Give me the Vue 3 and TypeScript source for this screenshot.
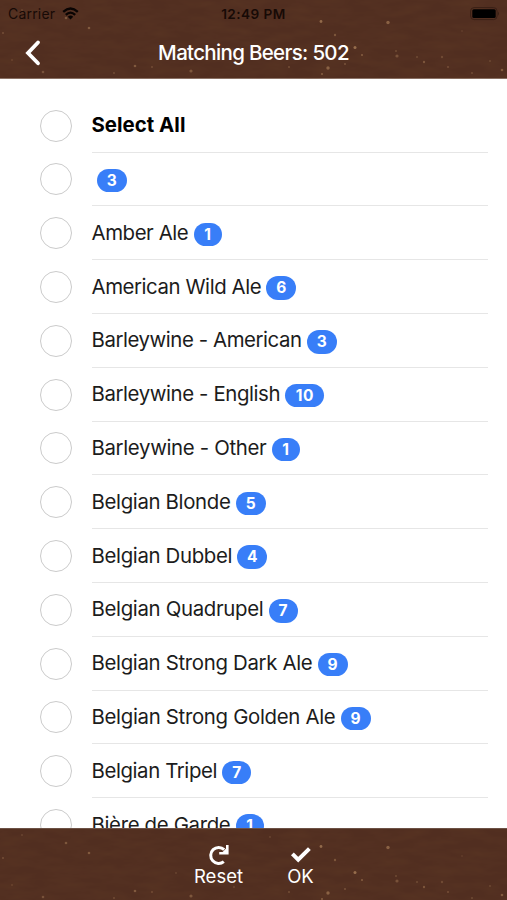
<script setup lang="ts">
interface Style {
  name: string
  count: number | null
  tracking: number
}

const styles: Style[] = [
  { name: 'Select All', count: null, tracking: 0.02 },
  { name: '', count: 3, tracking: 0 },
  { name: 'Amber Ale', count: 1, tracking: -0.42 },
  { name: 'American Wild Ale', count: 6, tracking: -0.43 },
  { name: 'Barleywine - American', count: 3, tracking: -0.43 },
  { name: 'Barleywine - English', count: 10, tracking: -0.4 },
  { name: 'Barleywine - Other', count: 1, tracking: -0.34 },
  { name: 'Belgian Blonde', count: 5, tracking: -0.34 },
  { name: 'Belgian Dubbel', count: 4, tracking: -0.34 },
  { name: 'Belgian Quadrupel', count: 7, tracking: -0.33 },
  { name: 'Belgian Strong Dark Ale', count: 9, tracking: -0.33 },
  { name: 'Belgian Strong Golden Ale', count: 9, tracking: -0.32 },
  { name: 'Belgian Tripel', count: 7, tracking: -0.4 },
  { name: 'Bière de Garde', count: 1, tracking: -0.34 },
]

// x, y, radius and opacity of the light flecks in the wood grain
const flecks: [number, number, number, number][] = [
  [66, 18, 1.3, 0.5], [89, 28, 1.3, 0.55], [3, 33, 1, 0.4], [22, 10, 0.9, 0.3],
  [321, 21.5, 1.4, 0.75], [388, 22.5, 1.7, 0.65], [335, 35, 1.2, 0.5], [355, 47.5, 1.5, 0.8],
  [362, 55, 1, 0.6], [397, 56, 1.6, 0.45], [396, 51, 1, 0.35], [328, 68, 1.7, 0.65],
  [322, 74, 1, 0.6], [345, 64, 1, 0.45], [289, 67, 1, 0.4], [424, 62, 1.2, 0.5],
  [417, 57, 1, 0.35], [442, 57, 1.2, 0.35], [448, 67, 1, 0.4], [472, 73, 1, 0.35],
  [502, 70, 1.3, 0.55], [490, 61, 1, 0.3], [135, 66, 1.3, 0.55], [114, 73, 0.9, 0.4],
  [191, 71, 1.6, 0.5], [152, 67, 0.9, 0.4], [43, 72, 1.3, 0.45], [12, 60, 1, 0.25],
  [176, 48, 0.9, 0.3], [270, 12, 0.9, 0.3], [234, 62, 1, 0.3], [462, 31, 0.9, 0.2],
]
</script>

<template>
  <div class="screen">
    <header class="top wood">
      <svg class="grain" viewBox="0 0 507 79" width="507" height="79" aria-hidden="true">
        <filter id="grain-top" x="0" y="0" width="100%" height="100%">
          <feTurbulence type="fractalNoise" baseFrequency="0.035 0.12" numOctaves="3" seed="7" />
          <feColorMatrix values="0 0 0 0 .13  0 0 0 0 .05  0 0 0 0 .02  .5 0 0 0 -.16" />
        </filter>
        <rect width="507" height="79" filter="url(#grain-top)" />
        <circle v-for="(f, i) in flecks" :key="i" :cx="f[0]" :cy="f[1]" :r="f[2]" :opacity="f[3]" fill="#a77d58" />
      </svg>
      <div class="status">
        <span class="carrier">Carrier</span>
        <svg class="wifi" viewBox="0 0 17 13" width="17" height="13" fill="none" stroke="#090403" stroke-width="2.3">
          <path d="M1.2 4.8Q8.5-1.9 15.8 4.8M3.8 7.8Q8.5 3.5 13.2 7.8" />
          <path d="M5.8 9.7Q8.5 7.5 11.2 9.7L8.5 12.5Z" fill="#090403" stroke="none" />
        </svg>
        <span class="time">12:49 PM</span>
        <svg class="battery" viewBox="0 0 30 14" width="30" height="14">
          <rect x=".6" y=".6" width="26.5" height="12" rx="3.5" fill="none" stroke="#3a2016" />
          <rect x="2.3" y="2.2" width="23.4" height="8.8" rx="1.5" fill="#000" />
          <path d="M28 4.5q2 2 0 4.2z" fill="#3a2016" />
        </svg>
      </div>
      <nav class="nav">
        <svg class="back" viewBox="0 0 18 28" width="18" height="28" fill="none" stroke="#fff" stroke-width="3.8" stroke-linecap="round" stroke-linejoin="miter">
          <path d="M14 3.5 4 14 14 24.3" />
        </svg>
        <h1>Matching Beers: 502</h1>
      </nav>
    </header>

    <ul class="list">
      <li v-for="(style, i) in styles" :key="i" class="row">
        <span class="radio"></span>
        <div class="entry">
          <span class="name" :class="{ strong: style.count === null }" :style="{ letterSpacing: `${style.tracking}px` }">{{ style.name }}</span>
          <span v-if="style.count !== null" class="badge" :class="{ narrow: style.count === 1, mid: style.count === 7, wide: style.count > 9 }">{{ style.count }}</span>
        </div>
      </li>
    </ul>

    <footer class="bottom wood">
      <svg class="grain" viewBox="0 4 507 72" width="507" height="72" aria-hidden="true">
        <filter id="grain-bottom" x="0" y="0" width="100%" height="100%">
          <feTurbulence type="fractalNoise" baseFrequency="0.035 0.12" numOctaves="3" seed="7" />
          <feColorMatrix values="0 0 0 0 .13  0 0 0 0 .05  0 0 0 0 .02  .5 0 0 0 -.16" />
        </filter>
        <rect y="4" width="507" height="72" filter="url(#grain-bottom)" />
        <circle v-for="(f, i) in flecks" :key="i" :cx="f[0]" :cy="f[1]" :r="f[2]" :opacity="f[3]" fill="#a77d58" />
      </svg>
      <div class="action">
        <svg viewBox="0 0 22 22" width="22" height="22" fill="none" stroke="#fff" stroke-width="3">
          <path d="M15.8 17.6A8 8 0 1 1 16.2 5.6" />
          <path d="M20.6 1V10.4H11.2V8H14.6L18 4.6V1Z" fill="#fff" stroke="none" />
        </svg>
        <span>Reset</span>
      </div>
      <div class="action">
        <svg viewBox="0 0 22 22" width="22" height="22" fill="none" stroke="#fff" stroke-width="4">
          <path d="M2.4 9.9 8.2 15.6 19.4 4.6" />
        </svg>
        <span>OK</span>
      </div>
    </footer>
  </div>
</template>

<style>
body {
  margin: 0;
  overflow: hidden;
}
</style>

<style scoped>
.screen {
  width: 507px;
  height: 900px;
  display: flex;
  flex-direction: column;
  overflow: hidden;
  background: #fff;
  font-family: Inter, "Liberation Sans", sans-serif;
}

.wood {
  position: relative;
  box-sizing: border-box;
  flex: none;
  background: #512e20;
}

.grain {
  position: absolute;
  inset: 0;
  display: block;
}

.top {
  height: 79px;
  border-bottom: 1px solid #8c7468;
}

.status {
  position: relative;
  height: 27px;
  display: grid;
  grid-template-columns: auto auto 1fr auto;
  align-items: center;
  padding: 0 7px 0 8px;
  box-sizing: border-box;
  color: #170a06;
  font-size: 14px;
}

.carrier {
  letter-spacing: 0.2px;
}

.wifi {
  margin-left: 7px;
}

.time {
  position: absolute;
  left: 0;
  right: 0;
  text-align: center;
  font-size: 13.6px;
  font-weight: 600;
  letter-spacing: 0.45px;
}

.battery {
  grid-column: 4;
}

.nav {
  position: relative;
  height: 51px;
  display: grid;
  grid-template-columns: 70px 1fr 70px;
  align-items: center;
}

.back {
  margin: 1px 0 0 24px;
}

h1 {
  margin: 0;
  color: #fff;
  text-align: center;
  font-size: 20.5px;
  line-height: 26px;
  font-weight: 500;
  letter-spacing: -0.68px;
  white-space: nowrap;
}

.list {
  flex: 1;
  min-height: 0;
  overflow: hidden;
  margin: 0;
  padding: 19.8px 0 0;
  list-style: none;
}

.row {
  height: 53.8px;
  display: grid;
  grid-template-columns: 91.5px 1fr;
  padding-right: 19px;
  align-items: stretch;
}

.radio {
  width: 30px;
  height: 30px;
  margin-left: 40px;
  align-self: center;
  border: 1.5px solid #cbcbcb;
  border-radius: 50%;
}

.entry {
  display: flex;
  align-items: center;
  box-sizing: border-box;
  border-bottom: 1px solid #e6e6e6;
  white-space: nowrap;
}

.name {
  color: #1c1c1c;
  font-size: 20.4px;
  line-height: 26px;
}

.strong {
  color: #000;
  font-weight: 700;
}

.badge {
  width: 30px;
  height: 23.5px;
  margin: 3px 0 0 5.2px;
  border-radius: 12px;
  background: #387ef8;
  color: #fff;
  font-size: 15.5px;
  line-height: 24px;
  font-weight: 700;
  text-align: center;
}

.narrow {
  width: 28px;
}

.mid {
  width: 29px;
}

.wide {
  width: 39px;
  letter-spacing: 0.4px;
}

.bottom {
  height: 72px;
  display: flex;
  justify-content: center;
  padding-left: 12px;
  border-top: 1px solid #6c5145;
}

.action {
  position: relative;
  width: 82px;
  display: flex;
  flex-direction: column;
  align-items: center;
  padding-top: 15px;
  box-sizing: border-box;
  color: #fff;
  font-size: 18.5px;
  line-height: 20px;
}
</style>
